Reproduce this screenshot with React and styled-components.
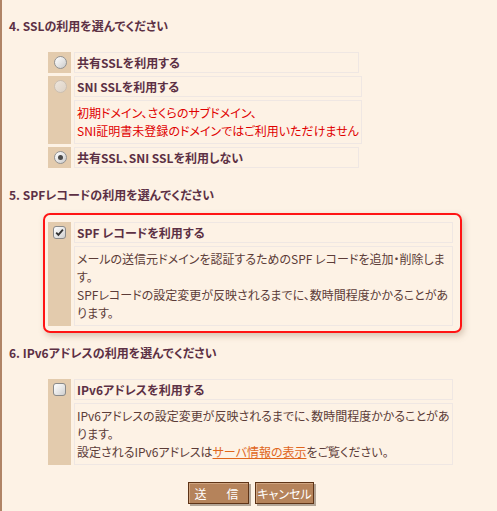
import React from 'react';
import styled, { createGlobalStyle, css } from 'styled-components';

const GlobalStyle = createGlobalStyle`
  html, body {
    margin: 0;
    padding: 0;
    background: #fdf2e5;
  }
  body {
    font-family: "Noto Sans CJK JP", "Noto Sans", sans-serif;
    font-size: 12px;
    font-feature-settings: "palt";
  }
`;

const Page = styled.div`
  min-height: 511px;
  box-sizing: border-box;
  border-left: 2px solid #b08466;
  padding: 17px 0 0 0;
`;

const Title = styled.div`
  margin-top: ${p => p.$mt || 0}px;
  padding-left: 7px;
  line-height: 18px;
  font-weight: bold;
  color: #5c3044;
`;

const Options = styled.div`
  display: flex;
  flex-direction: column;
  gap: 3px;
  width: ${p => p.$w}px;
  margin: ${p => p.$mt || 0}px 0 0 ${p => (p.$ml === undefined ? 46 : p.$ml)}px;
`;

const Option = styled.div`
  display: grid;
  grid-template-columns: 23px 1fr;
  column-gap: 3px;
`;

const ControlCell = styled.div`
  background: #e3cbad;
  padding: 4px 0 0 6px;
`;

const Cells = styled.div`
  display: flex;
  flex-direction: column;
  gap: 3px;
`;

const Label = styled.div`
  border: 1px solid #efe7e3;
  line-height: 19px;
  padding-left: 2px;
  font-weight: bold;
  color: #5c3044;
  white-space: nowrap;
`;

const Note = styled.div`
  border: 1px solid #efe7e3;
  line-height: 18px;
  padding: 3px 2px;
  color: ${p => (p.$warn ? '#e00000' : '#5c3c38')};
  white-space: nowrap;
`;

const Link = styled.a`
  color: #e0661c;
  text-decoration: underline;
`;

const Radio = styled.span`
  display: block;
  position: relative;
  width: 11px;
  height: 11px;
  border-radius: 50%;
  border: 1px solid #929292;
  background: linear-gradient(135deg, #ffffff 0%, #e4e4e4 55%, #c9c9c9 100%);
  ${p => p.$disabled && css`
    border-color: #cbbfb2;
    background: linear-gradient(135deg, #eee6dc 0%, #ddd2c6 100%);
  `}
  ${p => p.$checked && css`
    &::after {
      content: '';
      position: absolute;
      left: 3px;
      top: 3px;
      width: 5px;
      height: 5px;
      border-radius: 50%;
      background: #4a4a4a;
    }
  `}
`;

const Box = styled.span`
  display: block;
  width: 11px;
  height: 11px;
  margin-left: -1px;
  border-radius: 3px;
  border: 1px solid #8a8a8a;
  background: linear-gradient(135deg, #ffffff 0%, #e6e6e6 55%, #cfcfcf 100%);
  svg { display: block; }
`;

const Highlight = styled.div`
  width: 409px;
  margin: 9px 0 0 41px;
  padding: 7px 3px 5px 3px;
  border: 2px solid #ff1414;
  border-radius: 7px;
  box-shadow: 2px 3px 6px rgba(140, 110, 80, 0.35);
`;

const Buttons = styled.div`
  display: flex;
  gap: 6px;
  margin: 17px 0 0 186px;
`;

const Button = styled.button`
  width: ${p => p.$w}px;
  height: 22px;
  padding: 0;
  box-sizing: border-box;
  border: 1px solid #5e3417;
  background: #b5835b;
  color: #ffffff;
  font-family: inherit;
  font-size: 12px;
  font-feature-settings: "palt";
  letter-spacing: ${p => p.$ls || 0}px;
  box-shadow: inset 1px 1px 0 rgba(255, 230, 200, 0.35), 2px 2px 0 #b3a597;
  cursor: pointer;
`;

const Check = () => (
  <svg width="11" height="11" viewBox="0 0 11 11">
    <path d="M2.2 5.6 L4.4 7.9 L8.9 2.6" fill="none" stroke="#333" strokeWidth="1.8" />
  </svg>
);

export default function App() {
  return (
    <>
      <GlobalStyle />
      <Page>
        <Title>4. SSLの利用を選んでください</Title>
        <Options $w={311} $mt={17}>
          <Option>
            <ControlCell><Radio /></ControlCell>
            <Cells><Label>共有SSLを利用する</Label></Cells>
          </Option>
          <Option>
            <ControlCell><Radio $disabled /></ControlCell>
            <Cells>
              <Label>SNI SSLを利用する</Label>
              <Note $warn>
                初期ドメイン、さくらのサブドメイン、<br />
                SNI証明書未登録のドメインではご利用いただけません
              </Note>
            </Cells>
          </Option>
          <Option>
            <ControlCell><Radio $checked /></ControlCell>
            <Cells><Label>共有SSL、SNI SSLを利用しない</Label></Cells>
          </Option>
        </Options>

        <Title $mt={18}>5. SPFレコードの利用を選んでください</Title>
        <Highlight>
          <Options $w={405} $ml={0}>
            <Option>
              <ControlCell><Box><Check /></Box></ControlCell>
              <Cells>
                <Label>SPF レコードを利用する</Label>
                <Note>
                  メールの送信元ドメインを認証するためのSPF レコードを追加・削除しま<br />
                  す。<br />
                  SPFレコードの設定変更が反映されるまでに、数時間程度かかることがあ<br />
                  ります。
                </Note>
              </Cells>
            </Option>
          </Options>
        </Highlight>

        <Title $mt={11}>6. IPv6アドレスの利用を選んでください</Title>
        <Options $w={405} $mt={17}>
          <Option>
            <ControlCell><Box /></ControlCell>
            <Cells>
              <Label>IPv6アドレスを利用する</Label>
              <Note>
                IPv6アドレスの設定変更が反映されるまでに、数時間程度かかることがあ<br />
                ります。<br />
                設定されるIPv6アドレスは<Link href="#">サーバ情報の表示</Link>をご覧ください。
              </Note>
            </Cells>
          </Option>
        </Options>

        <Buttons>
          <Button $w={61} $ls={4}>送　信</Button>
          <Button $w={59}>キャンセル</Button>
        </Buttons>
      </Page>
    </>
  );
}
